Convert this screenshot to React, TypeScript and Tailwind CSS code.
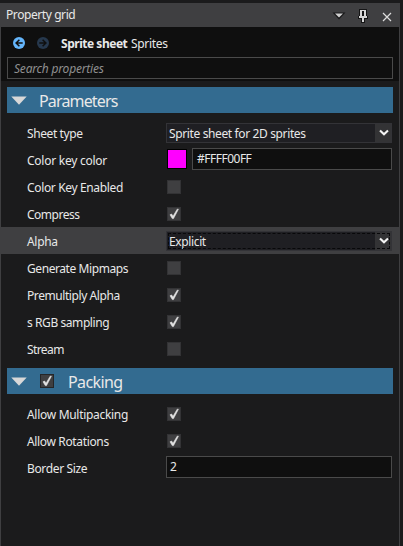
import type { ReactNode } from "react";

function Check() {
  return (
    <svg width="12" height="12" viewBox="0 0 12 12" fill="none">
      <path d="M2 6.8 3.6 6 5 8.3 9.2 1.2H10.4L5.5 10.6H4.3Z" fill="#e4e4e4" stroke="#e4e4e4" strokeWidth="0.6" />
    </svg>
  );
}

function Checkbox({ checked = false, header = false }: { checked?: boolean; header?: boolean }) {
  return (
    <div className={`flex h-3.5 w-3.5 items-center justify-center border ${header ? "border-[#252527]" : "ml-px border-[#333335]"} bg-[#3f3f41]`}>
      {checked && <Check />}
    </div>
  );
}

function Row({ label, spacing, active = false, children }: { label: string; spacing: string; active?: boolean; children: ReactNode }) {
  return (
    <div className={`flex h-[27px] items-center pt-px pl-[26px] pr-[7px] ${active ? "bg-[#3f3f41]" : ""}`}>
      <span className={`w-[139px] shrink-0 pt-0.5 ${spacing}`}>{label}</span>
      {children}
    </div>
  );
}

function Combo({ value, focused = false }: { value: string; focused?: boolean }) {
  return (
    <div className="relative flex h-5 flex-1 border border-[#333337] bg-[#1f1f23]">
      <span className="flex-1 pl-0.5 leading-[19px] tracking-[-0.37px]">{value}</span>
      <span className="flex w-4 items-center justify-center bg-[#333335]">
        <svg width="10" height="8" viewBox="0 0 10 8" fill="none" stroke="#f4f4f4" strokeWidth="2.1" className="ml-0.5">
          <path d="M1 1.5 5 5.3 9 1.5" />
        </svg>
      </span>
      {focused && <span className="absolute inset-px border border-dashed border-[#08080a]" />}
    </div>
  );
}

function Header({ title, spacing, toggle = false }: { title: string; spacing: string; toggle?: boolean }) {
  return (
    <div className="mx-1.5 flex h-[26px] items-center bg-[#336b90] pl-1">
      <svg width="16" height="9" viewBox="0 0 16 9" className="shrink-0">
        <path d="M0.3 0.5H15.7L8 8.7Z" fill="#d8d8d8" />
      </svg>
      {toggle && <div className="ml-[13px]"><Checkbox checked header /></div>}
      <span className={`${toggle ? "ml-3.5" : "ml-[12px]"} pt-0.5 text-[16px] leading-6 ${spacing}`}>{title}</span>
    </div>
  );
}

function Arrow({ color, flip = false }: { color: string; flip?: boolean }) {
  return (
    <svg width="12" height="12" viewBox="0 0 12 12" className={flip ? "-scale-x-100" : ""}>
      <circle cx="6" cy="6" r="6" fill={color} />
      <path d="M9.7 6H3M6.4 2.8 3.1 6 6.4 9.2" fill="none" stroke="#0f0f0f" strokeWidth="1.5" />
    </svg>
  );
}

export default function App() {
  return (
    <div className="h-[546px] w-[403px] overflow-hidden bg-[#1b1b1c] pt-[3px] font-['Noto_Sans',sans-serif] text-[12px] leading-4 whitespace-nowrap text-[#e8e8e8]">
      <div className="flex h-[543px] w-[400px] flex-col border-x border-[#3f3f41]">
        <div className="flex h-6 shrink-0 items-center bg-[#3f3f41] pl-[5px]">
          <span className="flex-1 tracking-[-0.42px]">Property grid</span>
          <svg width="70" height="24" viewBox="0 0 70 24" className="shrink-0">
            <path d="M3.5 9.5H16.5L10 16.5Z" fill="#19191a" />
            <path d="M6 10.5H14L10 14.5Z" fill="#d0d0d0" />
            <path d="M30 6H38V13H39V16H36V20H32V16H29V13H30Z" fill="#151516" />
            <path d="M31 7H37V13H38V15H35V19H33V15H30V13H31Z" fill="#d6d6d6" />
            <path d="M33 8H35V13H33Z" fill="#151516" />
            <path d="M54 10 62 18M62 10 54 18" stroke="#dddddd" strokeWidth="1.2" />
          </svg>
        </div>
        <div className="flex h-[54px] shrink-0 flex-col bg-[#0f0f0f] px-1.5">
          <div className="flex h-[30px] items-center pl-1.5 pt-0.5">
            <Arrow color="#64b5fb" />
            <span className="ml-3 flex"><Arrow color="#26384d" flip /></span>
            <b className="ml-3 w-[70px] pt-0.5 tracking-[-0.47px]">Sprite sheet</b>
            <span className="pt-0.5 tracking-[-0.3px]">Sprites</span>
          </div>
          <div className="flex h-[22px] items-center border border-[#4a4a4a] pl-1.5 pt-0.5 text-[#909090] italic tracking-[-0.2px]">Search properties</div>
        </div>
        <div className="h-1.5 shrink-0" />
        <Header title="Parameters" spacing="tracking-[-0.85px]" />
        <div className="mt-1.5">
          <Row label="Sheet type" spacing="tracking-[-0.4px]"><Combo value="Sprite sheet for 2D sprites" /></Row>
          <Row label="Color key color" spacing="tracking-[-0.25px]">
            <div className="mb-0.5 ml-px mr-[5px] h-5 w-5 border border-black bg-[#ff00ff]" />
            <div className="mb-0.5 h-[22px] flex-1 border border-[#4a4a4a] bg-[#0f0f0f] pl-1 leading-5 tracking-[-0.5px]">#FFFF00FF</div>
          </Row>
          <Row label="Color Key Enabled" spacing="tracking-[-0.35px]"><Checkbox /></Row>
          <Row label="Compress" spacing="tracking-[-0.5px]"><Checkbox checked /></Row>
          <Row label="Alpha" spacing="tracking-[-0.3px]" active><Combo value="Explicit" focused /></Row>
          <Row label="Generate Mipmaps" spacing="tracking-[-0.42px]"><Checkbox /></Row>
          <Row label="Premultiply Alpha" spacing="tracking-[-0.42px]"><Checkbox checked /></Row>
          <Row label="s RGB sampling" spacing="tracking-[-0.42px]"><Checkbox checked /></Row>
          <Row label="Stream" spacing="tracking-[-0.6px]"><Checkbox /></Row>
        </div>
        <div className="h-1.5 shrink-0" />
        <Header title="Packing" spacing="tracking-[-0.6px]" toggle />
        <div className="mt-1.5">
          <Row label="Allow Multipacking" spacing="tracking-[-0.3px]"><Checkbox checked /></Row>
          <Row label="Allow Rotations" spacing="tracking-[-0.35px]"><Checkbox checked /></Row>
          <Row label="Border Size" spacing="tracking-[-0.35px]">
            <div className="mb-0.5 h-[22px] flex-1 border border-[#4a4a4a] bg-[#0f0f0f] pl-[3px] leading-5">2</div>
          </Row>
        </div>
      </div>
    </div>
  );
}
